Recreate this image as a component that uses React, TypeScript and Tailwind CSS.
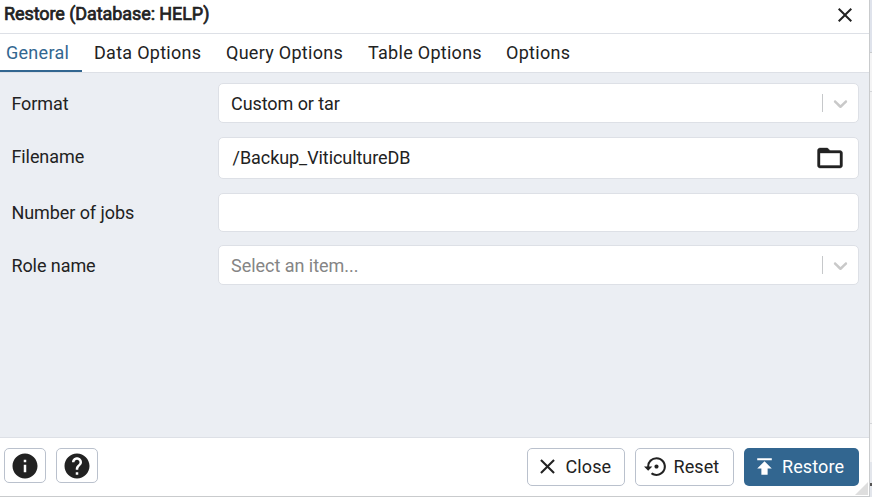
import type { ReactNode } from 'react';
import { MdClose, MdHelp, MdInfo, MdPublish, MdSettingsBackupRestore } from 'react-icons/md';

const tabs = [
  { label: 'General', box: 'w-[82px] pl-[6px]' },
  { label: 'Data Options', box: 'w-[132px] pl-3' },
  { label: 'Query Options', box: 'w-[142px] pl-3' },
  { label: 'Table Options', box: 'w-[138px] pl-3' },
  { label: 'Options', box: 'w-[90px] pl-3' },
];

function Chevron() {
  return (
    <div className="flex items-center">
      <div className="h-[18px] w-px bg-[#c6c8ca]" />
      <svg viewBox="0 0 20 20" className="mr-[6px] ml-[6px] size-[23px] fill-[#c9c9c9]">
        <path d="M4.516 7.548c0.436-0.446 1.043-0.481 1.576 0l3.908 3.747 3.908-3.747c0.533-0.481 1.141-0.446 1.574 0 0.436 0.445 0.408 1.197 0 1.615-0.406 0.418-4.695 4.502-4.695 4.502-0.217 0.223-0.502 0.335-0.787 0.335s-0.57-0.112-0.789-0.335c0 0-4.287-4.084-4.695-4.502s-0.436-1.17 0-1.615z" />
      </svg>
    </div>
  );
}

function Row({ label, height, labelPad, children }: { label: string; height: string; labelPad: string; children?: ReactNode }) {
  return (
    <div className={`flex ${height}`}>
      <label className={`flex w-[218px] items-center pl-[11.4px] ${labelPad}`}>{label}</label>
      <div className="flex flex-1 items-center justify-between rounded-[5px] border border-[#dde0e6] bg-white pl-3">
        {children}
      </div>
    </div>
  );
}

export default function App() {
  return (
    <div className="flex h-[497px] w-[872px] overflow-hidden bg-[#e6e8ea] font-['Roboto',sans-serif] text-[18px] leading-[22px] text-[#222]">
      <div className="relative flex h-[497px] w-[870px] flex-col border-r border-b border-[#c9cbcd] bg-white">
        <header className="flex h-[34px] shrink-0 items-center justify-between border-b border-[#dde0e6] pr-[12px] pb-[5px] pl-1">
          <h1 className="text-[18px] font-normal tracking-[-0.08px] [-webkit-text-stroke:0.7px_#222]">Restore (Database: HELP)</h1>
          <MdClose className="mt-[2px] size-6" />
        </header>
        <nav className="flex h-[39px] shrink-0 border-b border-[#dde0e6]">
          {tabs.map((tab, i) => (
            <div
              key={tab.label}
              className={`flex h-[38px] shrink-0 items-center pt-[2px] tracking-[0.28px] whitespace-nowrap ${tab.box} ${i === 0 ? 'border-b-2 border-[#326690] text-[#326690]' : 'pb-[2px]'}`}
            >
              {tab.label}
            </div>
          ))}
        </nav>
        <main className="flex h-[365px] shrink-0 flex-col border-b border-[#dde0e6] bg-[#ebeef3] pt-[10px] pr-[10px] tracking-[-0.07px]">
          <Row label="Format" height="h-10" labelPad="pt-[2px]">
            <span className="pt-[2px]">Custom or tar</span>
            <Chevron />
          </Row>
          <div className="h-[14px]" />
          <Row label="Filename" height="h-[42px]" labelPad="pb-[2px]">
            <span className="pl-[1.6px]">/Backup_ViticultureDB</span>
            <svg viewBox="0 0 24 24" className="mr-[13px] size-[30px] fill-current stroke-current [stroke-width:0.3]">
              <path d="M20 6h-8l-2-2H4c-1.1 0-1.99.9-1.99 2L2 18c0 1.1.9 2 2 2h16c1.1 0 2-.9 2-2V8c0-1.1-.9-2-2-2zm0 12H4V8h16v10z" />
            </svg>
          </Row>
          <div className="h-[14px]" />
          <Row label="Number of jobs" height="h-[39px]" labelPad="pt-0" />
          <div className="h-[13px]" />
          <Row label="Role name" height="h-10" labelPad="pt-[2px]">
            <span className="pt-[2px] tracking-[-0.03px] text-[#858585]">Select an item...</span>
            <Chevron />
          </Row>
        </main>
        <footer className="flex flex-1 items-start pt-[10px] pr-[10px] pl-1">
          <button className="flex h-[35px] w-[42px] items-center justify-center rounded-[5px] border border-[#bac1cd]">
            <MdInfo className="size-[30px] shrink-0" />
          </button>
          <button className="ml-[10px] flex h-[35px] w-[42px] items-center justify-center rounded-[5px] border border-[#bac1cd]">
            <MdHelp className="size-[30px] shrink-0" />
          </button>
          <div className="flex-1" />
          <button className="flex h-[38px] w-[98px] items-center rounded-[5px] border border-[#bac1cd] pl-[7px]">
            <MdClose className="mr-[5.5px] mb-px size-[25px]" />
            <span className="tracking-[0.1px]">Close</span>
          </button>
          <button className="ml-[10px] flex h-[38px] w-[99px] items-center rounded-[5px] border border-[#bac1cd] pl-[8px]">
            <MdSettingsBackupRestore className="mr-[4.5px] mb-px size-[25px]" />
            <span className="tracking-[0.1px]">Reset</span>
          </button>
          <button className="ml-[10px] flex h-[38px] w-[115px] items-center rounded-[5px] bg-[#326690] pl-[8px] text-white">
            <MdPublish className="mr-[5px] mb-px size-[25px]" />
            <span className="tracking-[0.1px]">Restore</span>
          </button>
        </footer>
        <svg className="absolute right-[1px] bottom-[1px] size-[13px]" viewBox="0 0 14 14">
          <path d="M14 0V14H0Z" fill="#dedede" />
        </svg>
      </div>
      <div className="flex w-[2px] flex-col">
        <div className="h-[53px] border-b border-[#c9cbcd] bg-[#dfe3ec]" />
        <div className="h-[39px] border-b border-[#d4d6d9] bg-[#f4f4f5]" />
        <div className="h-[332px] border-b border-[#d4d6d9] bg-[#f1f1f2]" />
        <div className="flex-1 bg-[#f4f4f5]" />
        <div className="h-[35px] bg-[#e3e6ec] pt-[21px]">
          <div className="h-[3px] bg-[#555]" />
        </div>
      </div>
    </div>
  );
}
